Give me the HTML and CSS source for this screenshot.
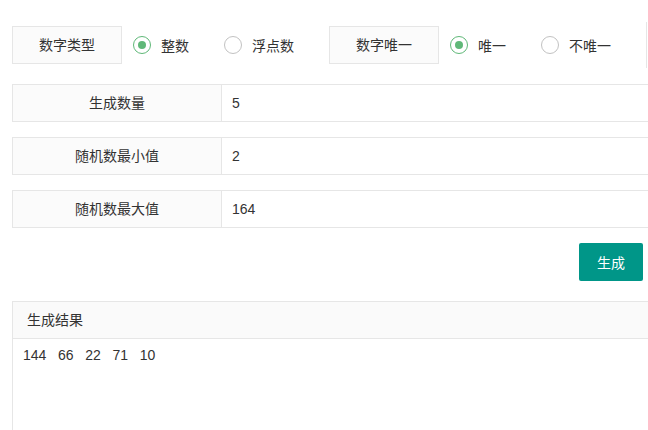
FILE: index.html
```html
<!DOCTYPE html>
<html lang="zh-CN">
<head>
    <meta charset="UTF-8">
    <meta name="viewport" content="width=device-width, initial-scale=1.0">
    <title>随机数生成</title>
    <link rel="stylesheet" href="styles.css">
</head>
<body>

    <div class="page">
        <div class="option-row">
            <div class="option-label">数字类型</div>
            <div class="radio-group">
                <label class="radio checked"><span class="radio-icon"></span>整数</label>
                <label class="radio"><span class="radio-icon"></span>浮点数</label>
            </div>

            <div class="option-label">数字唯一</div>
            <div class="radio-group">
                <label class="radio checked"><span class="radio-icon"></span>唯一</label>
                <label class="radio"><span class="radio-icon"></span>不唯一</label>
            </div>
            <div class="option-edge"></div>
        </div>

        <div class="field">
            <div class="field-label">生成数量</div>
            <div class="field-value">5</div>
        </div>
        <div class="field">
            <div class="field-label">随机数最小值</div>
            <div class="field-value">2</div>
        </div>
        <div class="field">
            <div class="field-label">随机数最大值</div>
            <div class="field-value">164</div>
        </div>

        <div class="actions">
            <button class="btn">生成</button>
        </div>

        <div class="result">
            <div class="result-header">生成结果</div>
            <div class="result-body">144&nbsp;&nbsp;&nbsp;66&nbsp;&nbsp;&nbsp;22&nbsp;&nbsp;&nbsp;71&nbsp;&nbsp;&nbsp;10</div>
        </div>
    </div>

</body>
</html>
```

FILE: styles.css
```css
html, body {
    margin: 0;
    padding: 0;
    background: #fff;
    overflow: hidden;
}

body {
    font-family: "Liberation Sans", Arial, "Noto Sans CJK SC", sans-serif;
    font-size: 14px;
    color: #333;
}

.page {
    width: 900px;
    padding: 26px 0 0 12px;
}

/* top options line */
.option-row {
    display: flex;
    align-items: center;
    height: 38px;
    margin-bottom: 20px;
}

.option-label {
    box-sizing: border-box;
    width: 110px;
    height: 38px;
    line-height: 36px;
    text-align: center;
    background: #fbfbfb;
    border: 1px solid #e6e6e6;
}

.radio-group {
    display: flex;
    align-items: center;
    margin-left: 11px;
}

.radio {
    display: flex;
    align-items: center;
    margin-right: 35px;
    cursor: pointer;
}

.radio-group:last-of-type .radio:last-child {
    margin-right: 31px;
}

.radio-icon {
    box-sizing: border-box;
    width: 18px;
    height: 18px;
    border: 1.5px solid #c2c2c2;
    border-radius: 50%;
    margin-right: 10px;
    position: relative;
}

.radio.checked .radio-icon {
    border-color: #5fb878;
}

.radio.checked .radio-icon::after {
    content: "";
    position: absolute;
    left: 3.5px;
    top: 3.5px;
    width: 8px;
    height: 8px;
    border-radius: 50%;
    background: #5fb878;
}

.option-edge {
    width: 1px;
    height: 46px;
    background: #e6e6e6;
}

/* label + value rows */
.field {
    display: flex;
    height: 38px;
    box-sizing: border-box;
    border: 1px solid #e6e6e6;
    margin-bottom: 15px;
}

.field-label {
    width: 208px;
    line-height: 36px;
    text-align: center;
    background: #fbfbfb;
    border-right: 1px solid #e6e6e6;
}

.field-value {
    flex: 1;
    line-height: 36px;
    padding-left: 10px;
}

.actions {
    width: 631px;
    display: flex;
    justify-content: flex-end;
    margin-bottom: 20px;
}

.btn {
    height: 38px;
    padding: 0 18px;
    border: none;
    border-radius: 2px;
    background: #009688;
    color: #fff;
    font-family: inherit;
    font-size: 14px;
    cursor: pointer;
}

/* result panel */
.result {
    border: 1px solid #e6e6e6;
    height: 200px;
}

.result-header {
    height: 36px;
    line-height: 36px;
    padding-left: 14px;
    background: #fafafa;
    border-bottom: 1px solid #e6e6e6;
}

.result-body {
    padding: 6px 10px;
    line-height: 20px;
}
```
